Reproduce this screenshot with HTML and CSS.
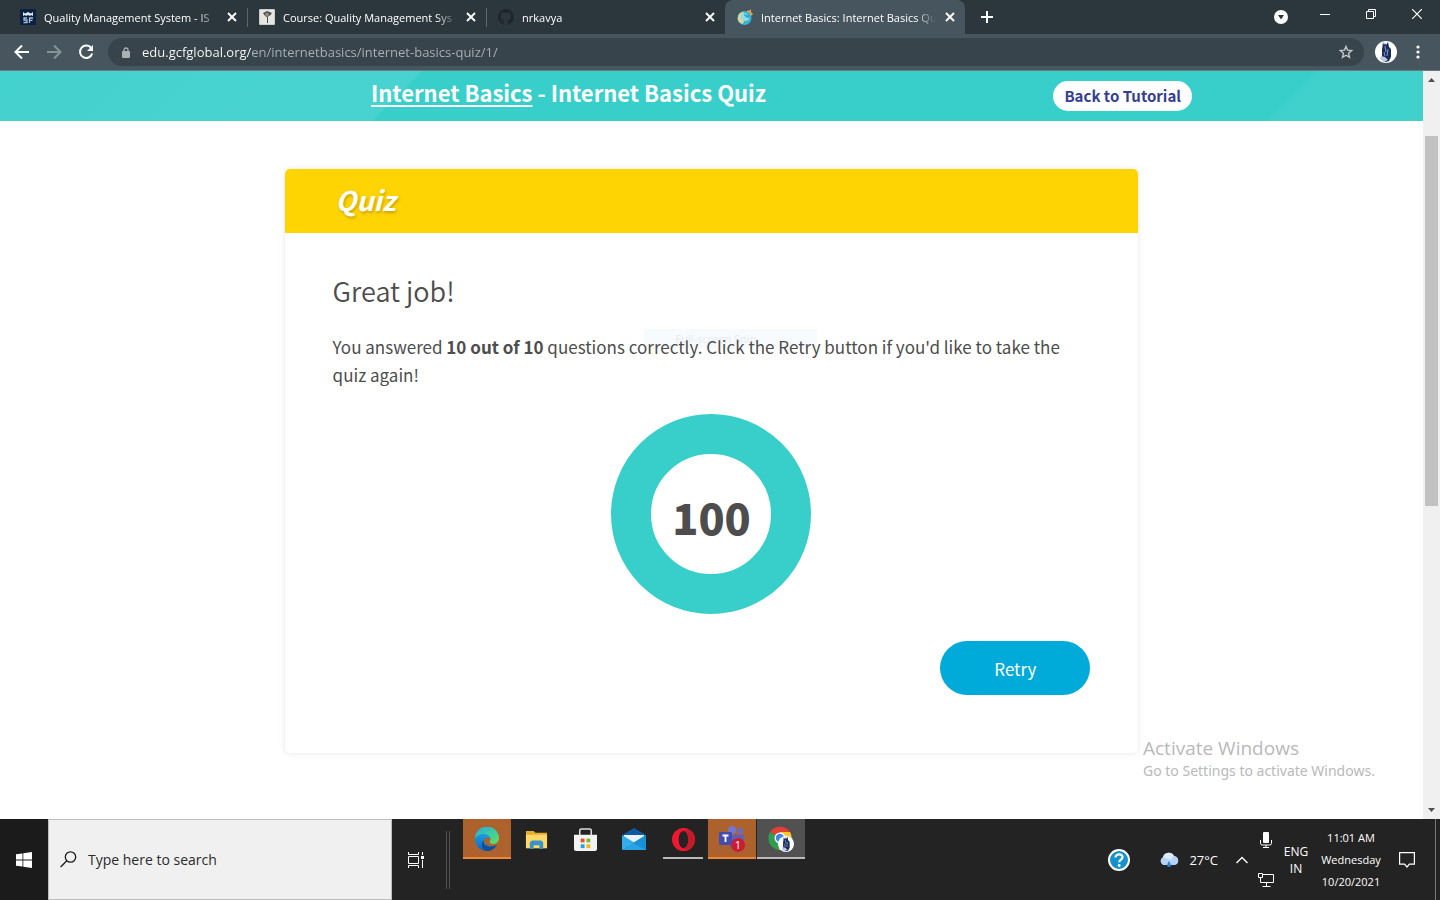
FILE: index.html
```html
<!DOCTYPE html>
<html lang="en">
<head>
<meta charset="utf-8">
<title>Internet Basics: Internet Basics Quiz</title>
<link rel="stylesheet" href="styles.css">
</head>
<body>
<svg class="defs" aria-hidden="true">
  <symbol id="x" viewBox="0 0 10 10"><path d="M1 1l8 8M9 1L1 9" fill="none" stroke="currentColor" stroke-width="1.900"/></symbol>
  <symbol id="person" viewBox="0 0 22 22"><circle cx="11" cy="11" r="11" fill="#fff"/><path d="M8 1l1 3 1-2 1 2 2-3 1 5 2 2v8l-2 4-3 1-3-1-1-4V9z" fill="#1b2b57"/><path d="M10 5l1 6M13 8l-1 7M9 11l1 4" stroke="#7f9bd4" stroke-width="1"/><path d="M6 15l4 1 3 3-4 2-4-3z" fill="#b9c9e4"/></symbol>
</svg>

<header class="browser">
  <div class="tabstrip">
    <div class="tab">
      <svg class="fav" viewBox="0 0 16 16"><rect width="16" height="16" fill="#0a2140"/><path d="M3 7V3l2 1.500L8 3l3 1.500L13 3v4l-2-1-1 1-2-1-2 1-1-1z" fill="#dfe8f2"/><path d="M7 9H4v2h3v2.500H3.500M9.500 14V9H13M9.500 11.300h3" fill="none" stroke="#a8bdd6" stroke-width="1.300"/></svg>
      <span class="tab-title">Quality Management System - IS</span>
      <button class="close" aria-label="Close tab"><svg><use href="#x"/></svg></button>
    </div>
    <div class="tab">
      <svg class="fav" viewBox="0 0 16 16"><rect width="16" height="16" rx="1" fill="#c9cbc9"/><rect x="1" y="1" width="14" height="14" fill="#e6e7e4"/><path d="M4 4l4-2 5 2-2 2.500-2 1V14H8V8L6 7z" fill="#4b4d4a"/><circle cx="8" cy="5.500" r="2" fill="#8b8d89"/></svg>
      <span class="tab-title">Course: Quality Management Sys</span>
      <button class="close" aria-label="Close tab"><svg><use href="#x"/></svg></button>
    </div>
    <div class="tab no-line">
      <svg class="fav" viewBox="0 0 16 16"><path fill="#1f262b" d="M8 0a8 8 0 0 0-2.500 15.600c.4 0 .5-.2.5-.4v-1.500c-2.200.5-2.700-1-2.700-1-.4-.9-.9-1.200-.9-1.200-.7-.5 0-.5 0-.5.800.1 1.200.8 1.200.8.700 1.200 1.900.9 2.400.7 0-.5.2-.9.500-1.100-1.800-.2-3.700-.9-3.700-4 0-.9.300-1.600.8-2.100 0-.2-.3-1 .1-2.100 0 0 .7-.2 2.200.8a7.500 7.500 0 0 1 4 0c1.500-1 2.200-.8 2.200-.8.400 1.100.1 1.900.1 2.100.5.500.8 1.200.8 2.100 0 3.100-1.900 3.800-3.700 4 .3.300.6.800.6 1.500v2.300c0 .2.100.5.500.4A8 8 0 0 0 8 0z"/></svg>
      <span class="tab-title">nrkavya</span>
      <button class="close" aria-label="Close tab"><svg><use href="#x"/></svg></button>
    </div>
    <div class="tab active">
      <svg class="fav" viewBox="0 0 16 16"><path d="M9 3l2-2 1 1 2-2v3l2 2-3 3z" fill="#f0a04a"/><circle cx="7.500" cy="9" r="7" fill="#38b4d3"/><path d="M1 8c0-3 3-5 6-5L6 6l-2 3 3 3-1 3C2 14 0 11 1 8z" fill="#d9d49a"/><path d="M4 6c3-3 7-2 8 1s-1 5-4 5-6-4-4-6z" fill="#8edcea"/><path d="M7 5c2 1 4 1 5 0 1 1 1 3 0 4-2 0-5-1-5-4z" fill="#35a9cf"/></svg>
      <span class="tab-title">Internet Basics: Internet Basics Qu</span>
      <button class="close" aria-label="Close tab"><svg><use href="#x"/></svg></button>
    </div>
    <button class="newtab" aria-label="New tab"><svg viewBox="0 0 12 12"><path d="M6 0v12M0 6h12" stroke="#fff" stroke-width="2"/></svg></button>
    <div class="winctl">
      <button aria-label="Search tabs"><svg width="14" height="14" viewBox="0 0 14 14"><circle cx="7" cy="7" r="7" fill="#fff"/><path d="M4 5h6L7 9.500z" fill="#2c373d"/></svg></button>
      <button class="sys" aria-label="Minimize"><svg width="10" height="10"><path d="M0 5.500h10" stroke="#fff"/></svg></button>
      <button class="sys" aria-label="Restore"><svg width="10" height="10" fill="none" stroke="#fff"><path d="M.5 2.500h7v7h-7zM2.500 2.500v-2h7v7h-2"/></svg></button>
      <button class="sys" aria-label="Close window"><svg width="10" height="10"><path d="M0 0l10 10M10 0L0 10" stroke="#fff" stroke-width="1.200"/></svg></button>
    </div>
  </div>
  <div class="toolbar">
    <button aria-label="Back"><svg viewBox="0 0 16 16"><path d="M15 8H2M8 1.500L1.500 8 8 14.500" fill="none" stroke="#fff" stroke-width="2"/></svg></button>
    <button aria-label="Forward"><svg viewBox="0 0 16 16"><path d="M1 8h13M8 1.500L14.500 8 8 14.500" fill="none" stroke="#87939a" stroke-width="2"/></svg></button>
    <button aria-label="Reload"><svg viewBox="0 0 16 16"><path d="M13.300 4.200A6.200 6.200 0 1 0 14.200 9.500" fill="none" stroke="#fff" stroke-width="2"/><path d="M15 1v6H9z" fill="#fff"/></svg></button>
    <div class="omnibox">
      <svg class="lock" viewBox="0 0 8 11"><rect y="4" width="8" height="7" rx="1" fill="#a9b1b5"/><path d="M2 5V3a2 2 0 0 1 4 0v2" fill="none" stroke="#a9b1b5" stroke-width="1.300"/></svg>
      <input class="url" type="text" aria-label="Address" value="edu.gcfglobal.org/en/internetbasics/internet-basics-quiz/1/">
      <button aria-label="Bookmark this page"><svg viewBox="0 0 16 16"><path d="M8 2.500l1.600 3.700 4.100.4-3.100 2.700.9 4L8 11.200l-3.500 2.100.9-4-3.100-2.700 4.100-.4z" fill="none" stroke="#c3c9cc" stroke-width="1.400"/></svg></button>
    </div>
    <button class="avatar" aria-label="Profile"><svg><use href="#person"/></svg></button>
    <button aria-label="Menu"><svg viewBox="0 0 16 16" fill="#fff"><circle cx="8" cy="3" r="1.600"/><circle cx="8" cy="8" r="1.600"/><circle cx="8" cy="13" r="1.600"/></svg></button>
  </div>
</header>

<div class="viewport">
  <main class="page">
    <div class="hero">
      <div class="hero-inner">
        <h1><a href="#basics">Internet Basics</a> - Internet Basics Quiz</h1>
        <a class="back" href="#tutorial">Back to Tutorial</a>
      </div>
    </div>
    <section class="card">
      <div class="card-head"><em>Quiz</em></div>
      <div class="card-body">
        <h2>Great job!</h2>
        <div class="result">
          <div class="snip">Full-screen Snip</div>
          <p>You answered <b>10 out of 10</b> questions correctly. Click the Retry button if you'd like to take the quiz again!</p>
        </div>
        <div class="score">100</div>
        <button class="retry">Retry</button>
      </div>
    </section>
    <div class="watermark"><div class="wm-title">Activate Windows</div><div>Go to Settings to activate Windows.</div></div>
  </main>
  <div class="scroll" aria-hidden="true">
    <svg viewBox="0 0 7 4"><path d="M0 4h7L3.500 0z"/></svg>
    <div class="track"><div class="thumb"></div></div>
    <svg viewBox="0 0 7 4"><path d="M0 0h7L3.500 4z"/></svg>
  </div>
</div>

<footer class="taskbar">
  <button class="start" aria-label="Start"><svg width="16" height="16" fill="#fff"><path d="M0 2.300L6.500 1.400V7.600H0zM7.300 1.200L16 0v7.600H7.300zM0 8.400h6.500v6.200L0 13.700zM7.300 8.400H16V16l-8.700-1.200z"/></svg></button>
  <label class="search">
    <svg width="17" height="17" fill="none" stroke="#1b1b1b" stroke-width="1.300"><circle cx="10.500" cy="6" r="5.200"/><path d="M6.800 9.700L.6 16"/></svg>
    <input type="text" aria-label="Search" placeholder="Type here to search">
  </label>
  <button class="taskview" aria-label="Task view"><svg width="16" height="16" fill="none" stroke="#fff"><path d="M.5 4.500h10v7H.5zM.5 0v2.500h10V0M.5 16v-2.500h10V16M14.500 0v3M14.500 8v8"/><path d="M13 4h3v3h-3z" fill="#fff" stroke="none"/></svg></button>
  <div class="grip"></div>
  <nav class="apps">
    <button class="app hot" aria-label="Edge"><svg viewBox="0 0 24 24"><defs><linearGradient id="ea" x1="0" y1="0" x2="1" y2="1"><stop offset="0" stop-color="#27a9e0"/><stop offset=".6" stop-color="#42cf9b"/><stop offset="1" stop-color="#6bdc57"/></linearGradient><linearGradient id="eb" x1="0" y1="0" x2="0" y2="1"><stop offset="0" stop-color="#1b9de0"/><stop offset="1" stop-color="#1165c0"/></linearGradient></defs><path d="M0 12a12 12 0 0 1 24-1c0 4-3 6-6 6-3 0-4-1.500-3-3 2-4-2-6-5-6-5 0-9 2-10 4z" fill="url(#ea)"/><path d="M0 12c1-4 6-5 9-5 3 0 6 2 6 5-1-2-6-2-6 2 0 4 6 7 13 4-3 4-6 6-10 6C5 24 0 19 0 12z" fill="url(#eb)"/><path d="M9 13c-2 5 4 9 13 5-3 4-6 6-10 6-5-1-7-7-3-11z" fill="#0d4f9a"/></svg></button>
    <button class="app" aria-label="File Explorer"><svg viewBox="0 0 24 24"><path d="M1 3h8l2 2h12v16H1z" fill="#e5ad2d"/><path d="M1 7h22v14H1z" fill="#ffd968"/><path d="M5 22v-7l2-2h10l2 2v7h-4v-4H9v4z" fill="#3b93cc"/></svg></button>
    <button class="app" aria-label="Microsoft Store"><svg viewBox="0 0 24 24"><path d="M6 8V2.500Q6 1 7.500 1h9Q18 1 18 2.500V8" fill="none" stroke="#ddd" stroke-width="1.600"/><path d="M0 7h24v15q0 2-2 2H2q-2 0-2-2z" fill="#f3f3f3"/><path d="M7 11h4v4H7z" fill="#e8502a"/><path d="M13 11h4v4h-4z" fill="#7eb82a"/><path d="M7 17h4v4H7z" fill="#23a2dd"/><path d="M13 17h4v4h-4z" fill="#f6b416"/></svg></button>
    <button class="app" aria-label="Mail"><svg viewBox="0 0 24 24"><path d="M0 8l12-7 12 7v4H0z" fill="#0f5aa3"/><path d="M2 8h20v3l-10 7L2 11z" fill="#e9f4fb"/><path d="M0 8l13 8-13 7z" fill="#34aeea"/><path d="M24 8v15H0z" fill="#2aa3e4"/><path d="M24 8v15L11 16z" fill="#1990d6"/></svg></button>
    <button class="app open" aria-label="Opera"><svg viewBox="0 0 24 24"><path d="M12 0a12 12 0 1 0 0 24 12 12 0 0 0 0-24zm0 3c3 0 5 4 5 9s-2 9-5 9-5-4-5-9 2-9 5-9z" fill="#f0172f" fill-rule="evenodd"/><path d="M12 3c3-2 6-1 8 0a12 12 0 0 1 0 18c-2 1-5 2-8 0 3 0 5-4 5-9s-2-9-5-9z" fill="#c41a2a"/></svg></button>
    <button class="app hot" aria-label="Teams"><svg class="wide" viewBox="0 0 26 26"><circle cx="13" cy="4" r="4" fill="#7377cf"/><circle cx="21" cy="5" r="3" fill="#666bc6"/><path d="M10 9h15v8q0 7-7 7t-8-7z" fill="#5a60be"/><rect y="6" width="13" height="13" rx="1" fill="#454eb0"/><path d="M3.500 9.500h6M6.500 9.500v6.500" stroke="#fff" stroke-width="1.800"/><circle cx="19" cy="19" r="7" fill="#cb1c33"/><text class="badge" x="19" y="23">1</text></svg></button>
    <button class="app current" aria-label="Chrome"><svg class="wide" viewBox="0 0 26 26"><path d="M12 12L2 6a12 12 0 0 1 20 0z" fill="#e34133"/><path d="M12 12L2 6a12 12 0 0 0 9 18z" fill="#2f9d4d"/><path d="M12 12l-1 12A12 12 0 0 0 22 6H12z" fill="#fac72e"/><circle cx="12" cy="12" r="5.500" fill="#fff"/><circle cx="12" cy="12" r="4.200" fill="#4285ed"/><use href="#person" x="10" y="10" width="16" height="16"/></svg></button>
  </nav>
  <div class="tray">
    <button aria-label="Help"><svg width="22" height="22"><circle cx="11" cy="11" r="10" fill="#1592c9" stroke="#fff" stroke-width="2"/><path d="M7.500 8.500c0-4.500 7.500-4 7 0-.3 2.200-3.300 2.300-3.300 4.800" fill="none" stroke="#fff" stroke-width="2.200"/><circle cx="11.200" cy="16.500" r="1.400" fill="#fff"/></svg></button>
    <button class="weather"><svg width="22" height="16"><path d="M5 13a4.500 4.500 0 0 1 0-8 6 6 0 0 1 11-1 4.600 4.600 0 0 1 1 9z" fill="#b5d4f5"/><path d="M5 5a6 6 0 0 1 11-1c-2 1-3 3-3 4-3-2-6-1-8-3z" fill="#dcebfb"/><path d="M11 9c2 3 3 6 0 6s-2-3 0-6z" fill="#3285d0"/></svg><span>27°C</span></button>
    <button aria-label="Show hidden icons"><svg width="12" height="8"><path d="M.5 7L6 1.500 11.500 7" fill="none" stroke="#fff" stroke-width="1.300"/></svg></button>
    <div class="stack">
      <svg width="16" height="16"><rect x="5" width="6" height="11" rx="1" fill="#fff"/><path d="M2.500 8v3.500q0 1.500 2 1.500h7q2 0 2-1.500V8M8 13v2.500M5 15.500h6" fill="none" stroke="#fff"/></svg>
      <svg width="16" height="16" fill="none" stroke="#fff"><path d="M5 2.500h10.500v8h-13V7M8.500 10.500V14M4.500 14.500h8M.5 1.500h4v4h-4zM2.500 5.500v3"/></svg>
    </div>
    <button class="lang">ENG<br>IN</button>
    <button class="clock">11:01 AM<br>Wednesday<br>10/20/2021</button>
    <button aria-label="Notifications"><svg width="16" height="16" fill="none" stroke="#fff" stroke-width="1.200"><path d="M.6 .6h14.800v11.500h-5L8 15l-2.500-2.900H.6z"/></svg></button>
  </div>
  <div class="peek"></div>
</footer>
</body>
</html>
```
FILE: styles.css
```css
* { box-sizing: border-box; }
html, body { height: 100%; }
body {
  margin: 0;
  display: flex;
  flex-direction: column;
  overflow: hidden;
  font-family: "Open Sans", "Noto Sans", sans-serif;
  background: #fff;
}
button { border: 0; padding: 0; background: none; font: inherit; color: inherit; display: flex; align-items: center; justify-content: center; }
svg { display: block; flex: none; }
.defs { position: absolute; width: 0; height: 0; }

/* browser chrome */
.browser { flex: none; color: #fff; }
.tabstrip { display: flex; height: 34px; padding-left: 8px; background: #2c373d; }
.tab {
  position: relative;
  display: flex;
  align-items: center;
  width: 239px;
  padding: 0 9px 0 12px;
  font-size: 11px;
}
.tab::after { content: ""; position: absolute; right: -1px; top: 8px; width: 1px; height: 19px; background: #5d676c; }
.tab.no-line::after, .tab.active::after { display: none; }
.tab.active { width: 240px; background: #46555e; border-radius: 8px 8px 0 0; }
.fav { width: 16px; height: 16px; margin-right: 8px; }
.tab-title {
  flex: 1;
  min-width: 0;
  overflow: hidden;
  white-space: nowrap;
  mask-image: linear-gradient(90deg, #000 88%, transparent);
}
.close { width: 12px; height: 12px; margin-left: 8px; }
.close svg { width: 10px; height: 10px; }
.newtab { width: 44px; }
.newtab svg { width: 12px; height: 12px; }
.winctl { display: flex; margin-left: auto; }
.winctl button { width: 42px; }
.winctl .sys { width: 46px; height: 28px; }

.toolbar { display: flex; align-items: center; height: 37px; padding: 0 6px; background: #46555e; border-bottom: 1px solid #6b7a80; }
.toolbar button { width: 32px; height: 28px; }
.toolbar button svg { width: 16px; height: 16px; }
.omnibox { flex: 1; display: flex; align-items: center; height: 28px; margin-left: 6px; padding: 0 2px 0 14px; border-radius: 14px; background: #38444b; }
.lock { width: 8px; height: 11px; margin-right: 12px; }
.url {
  flex: 1;
  min-width: 0;
  border: 0;
  padding: 0;
  font: 13px/20px "Open Sans", sans-serif;
  color: #fff;
  background: linear-gradient(90deg, #fff 109px, #aab3b8 109px);
  background-clip: text;
  -webkit-text-fill-color: transparent;
}
.toolbar .avatar { width: 44px; }
.toolbar .avatar svg { width: 22px; height: 22px; }
.toolbar > button:last-child { width: 20px; margin-right: 6px; }

/* web page */
.viewport { flex: 1; min-height: 0; display: flex; }
.page {
  flex: 1;
  position: relative;
  overflow: hidden;
  font-family: "Noto Sans CJK SC", "Noto Sans", sans-serif;
  color: #4d4d4d;
}
.hero {
  height: 50px;
  background: linear-gradient(135deg, #44d2cf 0, #49d3d0 28.600%, #38cfca 28.700%, #38cfca 89.400%, #40d1cd 89.500%);
}
.hero-inner { display: flex; align-items: center; justify-content: space-between; max-width: 961px; height: 50px; margin: 0 auto; padding-left: 140px; color: #fff; }
.hero h1 { margin: 0; padding-bottom: 8px; font-size: 22px; line-height: 32px; font-weight: 700; }
.hero h1 a { color: #fff; text-decoration-thickness: 2px; text-underline-offset: 3px; }
.back { padding: 0 11px; border-radius: 15px; background: #fff; color: #343e93; font-size: 15px; line-height: 30px; font-weight: 700; text-decoration: none; }

.card { width: 60%; margin: 48px auto 0; border-radius: 5px; box-shadow: 0 0 6px rgba(0, 0, 0, .1); }
.card-head {
  height: 64px;
  padding-left: 51px;
  border-radius: 5px 5px 0 0;
  background: #ffd403;
  color: #fff;
  font-size: 27px;
  line-height: 62px;
  font-weight: 700;
  text-shadow: 1px 2px 3px rgba(120, 90, 0, .4);
}
.card-body { display: flex; flex-direction: column; padding: 40px 48px 58px; }
.card-body h2 { margin: 0 0 24px; font-size: 27px; line-height: 36px; font-weight: 350; }
.result { position: relative; }
.result p { position: relative; margin: 0; font-size: 17px; line-height: 28px; }
.snip { position: absolute; left: 311px; top: -4px; width: 173px; height: 20px; padding-left: 32px; background: #f7fbfe; color: #e6eaee; font: 11px/20px "Open Sans", sans-serif; }
.score {
  align-self: center;
  width: 200px;
  height: 200px;
  margin: 25px 0 27px;
  border: 40px solid #38cfca;
  border-radius: 50%;
  font-size: 43px;
  line-height: 124px;
  font-weight: 900;
  text-align: center;
}
.retry { align-self: flex-end; width: 150px; height: 54px; border-radius: 27px; background: #00aad9; color: #fff; font-size: 17px; }
.watermark { position: absolute; left: 1143px; bottom: 38px; color: #b9b9b9; font: 14px/20px "Noto Sans", sans-serif; white-space: nowrap; }
.wm-title { font: 19px/26px "Open Sans", sans-serif; }

.scroll { display: flex; flex-direction: column; align-items: center; width: 17px; padding: 7px 0; background: #f0f0f0; }
.scroll svg { width: 7px; height: 4px; fill: #505050; }
.track { flex: 1; width: 13px; padding-top: 54px; }
.thumb { height: 55%; background: #c1c1c1; }

/* taskbar */
.taskbar { flex: none; display: flex; height: 81px; background: #232323; color: #fff; }
.start { width: 48px; background: #1b1b1b; }
.search { display: flex; align-items: center; width: 344px; padding-left: 11px; border: 1px solid #bdbdbd; background: #f0f0f0; }
.search input { flex: 1; min-width: 0; margin-left: 11px; padding: 0; border: 0; background: none; font: 14px/20px "Open Sans", sans-serif; }
.search input::placeholder { color: #2b2b2b; opacity: 1; }
.taskview { width: 48px; }
.grip { width: 4px; margin: 12px 13px 11px 6px; border: solid #505050; border-width: 0 1px; }
.apps { display: flex; align-items: flex-start; gap: 1px; }
.app { width: 48px; height: 40px; padding-top: 2px; border-bottom: 2px solid transparent; }
.app svg { width: 24px; height: 24px; }
.app:nth-child(2) svg, .app:nth-child(3) svg, .app.open svg { width: 23px; height: 23px; }
.app .wide { width: 26px; height: 26px; }
.app.hot { background: #ad622d; border-color: #f08532; }
.app.open { width: 40px; margin: 0 4px; border-color: #b9b9b9; }
.app.current { background: #515151; border-color: #b9b9b9; }
.badge { font-size: 11px; fill: #fff; text-anchor: middle; }
.tray { display: flex; align-items: center; margin-left: auto; font-size: 12px; }
.tray button { text-align: center; }
.tray .weather { gap: 9px; margin: 0 18px 0 28px; font-size: 13px; }
.stack { display: grid; gap: 24px; margin: 0 10px; }
.tray .lang { width: 24px; line-height: 17px; font-size: 12px; }
.tray .clock { width: 62px; margin: 0 17px 0 12px; font-size: 11px; line-height: 22px; }
.peek { width: 5px; margin-left: 20px; border-left: 1px solid #777; }
```
